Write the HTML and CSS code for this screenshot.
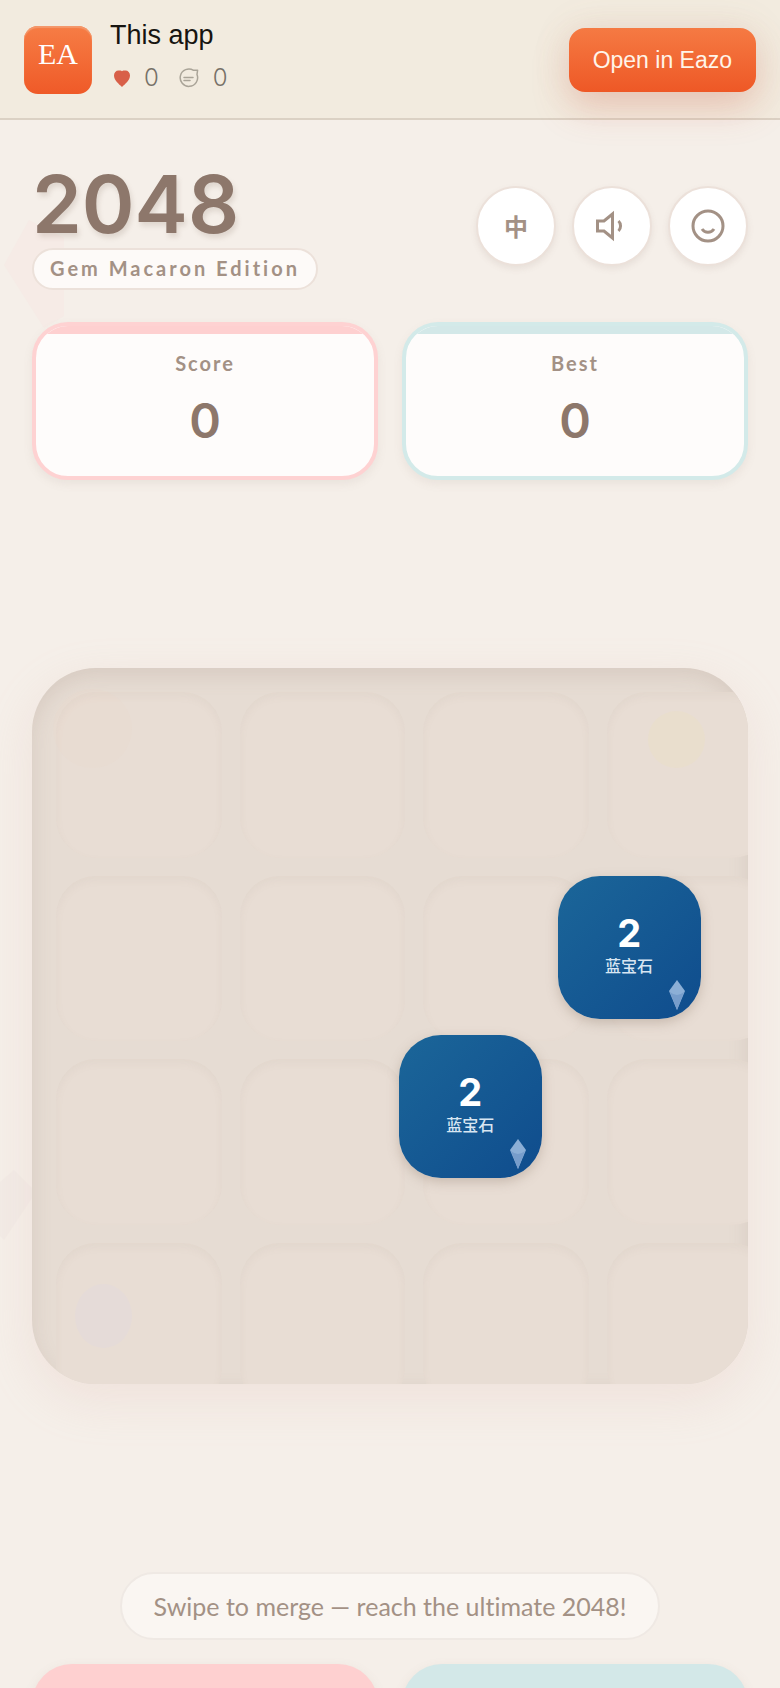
FILE: index.html
```html
<!DOCTYPE html>
<html lang="en">
<head>
<meta charset="utf-8">
<meta name="viewport" content="width=device-width, initial-scale=1">
<title>2048 Gem Macaron Edition</title>
<link rel="stylesheet" href="styles.css">
</head>
<body>
<header class="bar">
  <div class="logo">EA</div>
  <div class="info">
    <div class="app-name">This app</div>
    <div class="stats">
      <svg class="heart" viewBox="0 0 16 17" aria-hidden="true"><path d="M8 17C5 14 0 10.500 0 5.500C0 2.500 2 .5 4.500 .5C6 .5 7.200 .6 8 1.200C8.800 .6 10 .5 11.500 .5C14 .5 16 2.500 16 5.500C16 10.500 11 14 8 17Z" fill="#d85f48"/></svg>
      <span class="count">0</span>
      <svg class="chat" viewBox="0 0 20 20" aria-hidden="true" fill="none" stroke="#aaa498" stroke-width="1.500" stroke-linecap="round" stroke-linejoin="round"><path d="M14.500 2.300A8.700 8.700 0 1 0 18 6.500L18.600 2.200Z"/><path d="M5 9.500H14M5 12.500H11"/></svg>
      <span class="count">0</span>
    </div>
  </div>
  <a class="open" href="#game">Open in Eazo</a>
</header>

<main class="game" id="game">
  <svg class="deco deco-top" viewBox="0 0 60 110" aria-hidden="true"><path d="M25 0L0 45L40 108L60 96V18Z" fill="#fcd5d5"/></svg>
  <svg class="deco deco-low" viewBox="0 0 36 72" aria-hidden="true"><path d="M0 12L14 0L36 22L4 70L0 66Z" fill="#e0cfcf"/></svg>

  <div class="top">
    <div class="brand">
      <h1 class="title">2048</h1>
      <div class="edition">Gem Macaron Edition</div>
    </div>
    <div class="tools">
      <button class="round" type="button">中</button>
      <button class="round" type="button" aria-label="Sound"><svg viewBox="0 0 36 36" aria-hidden="true" fill="none" stroke="currentColor" stroke-width="3"><path d="M3.500 13V23H10L18.500 30V6L10 13Z"/><path d="M24.500 13C27.200 15.500 27.200 20.500 24.500 23"/></svg></button>
      <button class="round" type="button" aria-label="Mood"><svg viewBox="0 0 36 36" aria-hidden="true" fill="none" stroke="currentColor" stroke-width="3"><circle cx="18" cy="18" r="15"/><path d="M12 21C15 25.300 21 25.300 24 21"/></svg></button>
    </div>
  </div>

  <div class="scores">
    <section class="card pink"><h2 class="label">Score</h2><div class="value">0</div></section>
    <section class="card mint"><h2 class="label">Best</h2><div class="value">0</div></section>
  </div>

  <div class="stage">
    <div class="board">
      <div class="cells">
        <div class="cell"></div><div class="cell"></div><div class="cell"></div><div class="cell"></div>
        <div class="cell"></div><div class="cell"></div><div class="cell"></div><div class="cell"></div>
        <div class="cell"></div><div class="cell"></div><div class="cell"></div><div class="cell"></div>
        <div class="cell"></div><div class="cell"></div><div class="cell"></div><div class="cell"></div>
      </div>
      <div class="spot spot-peach"></div>
      <div class="spot spot-gold"></div>
      <div class="spot spot-lilac"></div>
      <div class="tile tile-a">
        <span class="num">2</span><span class="gem-name" lang="zh">蓝宝石</span>
        <svg class="gem" viewBox="0 0 16 30" aria-hidden="true"><path d="M8 0L16 11L8 30L0 11Z" fill="#8cafd6"/><path d="M1 12Q8 18 15 12L8 30Z" fill="#779dcb"/></svg>
      </div>
      <div class="tile tile-b">
        <span class="num">2</span><span class="gem-name" lang="zh">蓝宝石</span>
        <svg class="gem" viewBox="0 0 16 30" aria-hidden="true"><path d="M8 0L16 11L8 30L0 11Z" fill="#8cafd6"/><path d="M1 12Q8 18 15 12L8 30Z" fill="#779dcb"/></svg>
      </div>
    </div>
  </div>

  <p class="hint">Swipe to merge — reach the ultimate 2048!</p>
  <div class="actions">
    <button class="action pink-fill" type="button" aria-label="New game"></button>
    <button class="action mint-fill" type="button" aria-label="Undo"></button>
  </div>
</main>
</body>
</html>
```
FILE: styles.css
```css
* { box-sizing: border-box; }

body {
  margin: 0;
  height: 100vh;
  overflow: hidden;
  background: #f5efe9;
  color: #8d776b;
  font-family: "Lato", "Noto Sans CJK SC", sans-serif;
}

.bar {
  position: relative;
  z-index: 1;
  display: flex;
  align-items: center;
  gap: 18px;
  height: 120px;
  padding: 2px 24px 0;
  border-bottom: 2px solid #dbd1c4;
  background: #f2ebdf;
  font-family: "Liberation Sans", sans-serif;
}

.logo {
  width: 68px;
  height: 68px;
  border-radius: 14px;
  background: linear-gradient(#f67d45, #ef5a28);
  box-shadow: inset 0 2px 1px #f4986c;
  color: #fff;
  font: 30px/56px "Liberation Serif", serif;
  text-align: center;
}

.info { flex: 1; }

.app-name {
  color: #171410;
  font-size: 27px;
  line-height: 36px;
}

.stats {
  display: flex;
  align-items: center;
  height: 50px;
  padding-left: 4px;
}

.heart { width: 16px; height: 17px; }
.chat { width: 20px; height: 20px; margin-left: 20px; }

.count {
  margin-left: 14px;
  color: #777168;
  font: 300 24px/32px "Inter", sans-serif;
}

.open {
  padding: 0 24px;
  border-radius: 16px;
  background: linear-gradient(#f57a43, #ee5826);
  box-shadow: 0 16px 36px rgba(216, 95, 72, 0.25), 0 0 40px rgba(160, 140, 110, 0.1);
  color: #fff4e8;
  font-size: 23px;
  line-height: 64px;
  text-decoration: none;
}

.game {
  position: relative;
  display: flex;
  flex-direction: column;
  min-height: calc(100vh - 40px);
  padding: 40px 32px 0;
}

.deco { position: absolute; }
.deco-top { left: 4px; top: 100px; width: 60px; opacity: 0.14; }
.deco-low { left: 0; top: 1050px; width: 36px; opacity: 0.1; }

.top {
  position: relative;
  display: flex;
  justify-content: space-between;
}

.title {
  margin: 0;
  font: 600 80px/88px "Inter", sans-serif;
  text-shadow: 2px 4px 5px rgba(141, 119, 107, 0.2);
}

.edition {
  display: inline-block;
  padding: 0 16px 2px;
  border: 2px solid #ece1da;
  border-radius: 22px;
  background: #fdfaf8;
  color: #a39185;
  font-size: 20px;
  font-weight: 700;
  letter-spacing: 3px;
  line-height: 36px;
}

.tools {
  display: flex;
  gap: 16px;
  padding-top: 26px;
}

.round {
  display: grid;
  place-items: center;
  width: 80px;
  height: 80px;
  padding: 0;
  border: 2px solid #ece1da;
  border-radius: 50%;
  background: #fff;
  box-shadow: 0 3px 6px rgba(141, 119, 107, 0.12);
  color: #a39185;
  font: 700 24px/32px "Noto Sans CJK SC", sans-serif;
}

.round svg { width: 36px; height: 36px; }

.scores {
  position: relative;
  display: grid;
  grid-template-columns: 1fr 1fr;
  gap: 24px;
  margin-top: 32px;
}

.card {
  height: 158px;
  overflow: hidden;
  border: 4px solid;
  border-radius: 36px;
  background: #fefcfb;
  box-shadow: 0 4px 10px rgba(141, 119, 107, 0.1);
  text-align: center;
}

.card::before {
  content: "";
  display: block;
  height: 8px;
}

.pink { border-color: #fed2d2; }
.pink::before { background: #fed0d0; }
.mint { border-color: #d3eae9; }
.mint::before { background: #d3e8e8; }

.label {
  margin: 15px 0 0;
  color: #a39185;
  font-size: 20px;
  font-weight: 700;
  letter-spacing: 2px;
  line-height: 28px;
}

.value {
  margin-top: 16px;
  color: #8d776b;
  font: 600 48px/56px "Inter", sans-serif;
}

.stage {
  position: relative;
  display: flex;
  flex: 1;
  align-items: center;
}

.stage::before {
  content: "";
  position: absolute;
  width: 100%;
  aspect-ratio: 1;
  border-radius: 64px;
  box-shadow: 0 16px 48px rgba(220, 175, 165, 0.2);
}

.board {
  position: relative;
  width: 100%;
  aspect-ratio: 1;
  overflow: hidden;
  border-radius: 64px;
  background: #e6dcd3;
  box-shadow: inset 0 8px 20px rgba(141, 119, 107, 0.16);
}

.cells {
  display: grid;
  grid-template-columns: repeat(4, 1fr);
  grid-template-rows: repeat(4, 1fr);
  gap: 18px;
  width: 100%;
  aspect-ratio: 1;
  margin: 24px;
}

.cell {
  border-radius: 40px;
  background: #e8ddd4;
  box-shadow: inset 0 4px 8px rgba(141, 119, 107, 0.06);
}

.spot { position: absolute; border-radius: 50%; }
.spot-peach { left: 3%; top: 3%; width: 11%; height: 11%; background: rgba(240, 215, 200, 0.12); }
.spot-gold { right: 6%; top: 6%; width: 8%; height: 8%; background: #e9decd; }
.spot-lilac { left: 6%; bottom: 5%; width: 8%; height: 9%; background: #e5dbd8; }

.tile {
  position: absolute;
  display: flex;
  flex-direction: column;
  align-items: center;
  justify-content: center;
  width: 20%;
  height: 20%;
  padding-bottom: 8px;
  border-radius: 42px;
  background: linear-gradient(135deg, #1b6699, #0f4c8d);
  box-shadow: 0 4px 12px rgba(141, 119, 107, 0.35);
  color: #fff;
}

.tile-a { left: 73.400%; top: 29%; }
.tile-b { left: 51.200%; top: 51.200%; }

.num { font: 700 38px/44px "Inter", sans-serif; }
.gem-name { color: #d8e6f2; font: 500 16px/20px "Noto Sans CJK SC", sans-serif; }

.gem {
  position: absolute;
  right: 16px;
  bottom: 9px;
  width: 16px;
  height: 30px;
}

.hint {
  align-self: center;
  margin: 0;
  padding: 0 32px;
  border: 2px solid #efe9e4;
  border-radius: 34px;
  background: #faf6f2;
  color: #a39185;
  font: 25px/64px "Lato", sans-serif;
  font-variant-ligatures: none;
}

.actions {
  display: grid;
  grid-template-columns: 1fr 1fr;
  gap: 24px;
  margin-top: 24px;
}

.action {
  height: 104px;
  border: 0;
  border-radius: 40px;
  box-shadow: 0 4px 12px rgba(141, 119, 107, 0.12);
}

.pink-fill { background: #fed0d0; }
.mint-fill { background: #d3e8e8; }
```
